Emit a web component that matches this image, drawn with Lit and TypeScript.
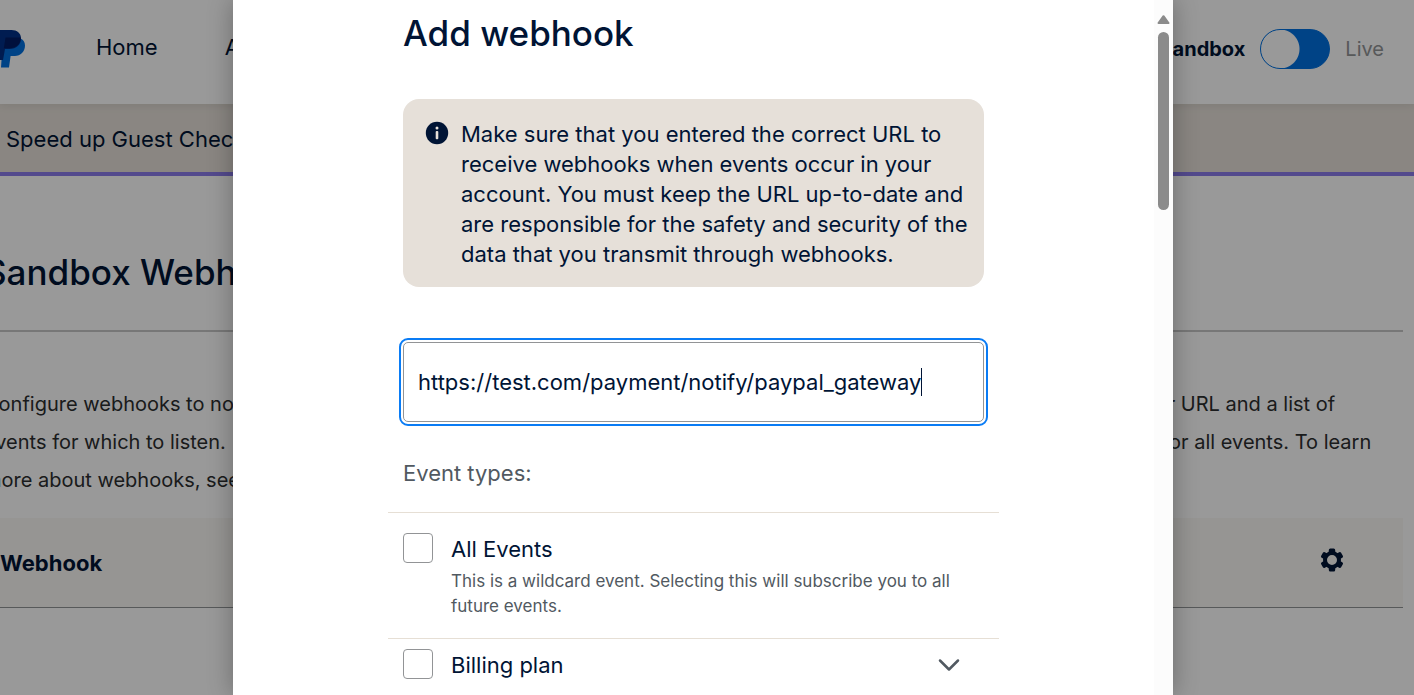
import { LitElement, html, css, svg } from "lit";
import { customElement, property, state } from "lit/decorators.js";

const gearTeeth = [0, 60, 120, 180, 240, 300];

@customElement("dashboard-page")
class DashboardPage extends LitElement {
  static styles = css`
    :host {
      display: block;
      height: 100%;
      overflow: hidden;
      color: #001435;
      font-size: 22px;
      line-height: 30px;
    }
    .header {
      display: flex;
      align-items: center;
      height: 104px;
      padding: 0 30px 6px 0;
      background: #fff;
      box-shadow: 0 2px 8px rgba(0, 0, 0, 0.08);
      position: relative;
      box-sizing: border-box;
    }
    .logo {
      display: block;
      width: 25px;
      height: 38px;
      margin-right: 71px;
    }
    .nav {
      display: flex;
      flex: 1;
      gap: 67px;
    }
    .nav a {
      color: inherit;
      text-decoration: none;
      padding-bottom: 4px;
    }
    .mode {
      display: flex;
      align-items: center;
      gap: 15px;
      font-size: 20px;
    }
    .mode-on {
      font-weight: 700;
    }
    .mode-off {
      color: #929496;
    }
    .switch {
      appearance: none;
      margin: 0;
      width: 70px;
      height: 40px;
      border: 1px solid #0070e0;
      border-radius: 20px;
      background: radial-gradient(circle at 19px 19px, #fff 19px, #0070e0 20px);
    }
    .banner {
      padding: 20px 6px 18px;
      background: #e6e0d9;
      border-bottom: 4px solid #8b7cec;
    }
    .body {
      margin: 0 11px 0 -16px;
    }
    .title {
      margin: 0;
      padding: 72px 0 34px;
      font-size: 35px;
      line-height: 48px;
      font-weight: 500;
      border-bottom: 2px solid #c6c6c6;
    }
    .intro {
      display: flex;
      justify-content: space-between;
      padding: 53px 0 19px;
      color: #2c2e2f;
      font-size: 20px;
      line-height: 38px;
      white-space: nowrap;
    }
    .intro p {
      margin: 0;
    }
    .intro-end {
      width: 334px;
    }
    .row {
      display: flex;
      align-items: center;
      justify-content: space-between;
      height: 89px;
      padding: 0 59px 0 16px;
      background: #faf8f5;
      border-bottom: 1px solid #929496;
      font-weight: 700;
    }
    .gear {
      border: 0;
      padding: 0 0 5px;
      background: none;
      color: inherit;
      display: flex;
    }
  `;

  render() {
    return html`
      <header class="header">
        <svg class="logo" viewBox="0 0 25 38" aria-hidden="true">
          <path fill="#0070e0" d="M1 37.500h8l1.600-11.500h4.200C20.500 26 25 21.500 25 15.500 25 12 23 9.500 20.500 8.500H3z" />
          <path fill="#003087" d="M-14 30H3l2-11h4.500C16.500 19 21 14.500 21 8.500 21 3 17 0 11.500 0H-10z" />
          <path fill="#001c64" d="M5.500 7.500h15.400C20.800 14 16 18.300 9.500 18.300H3.800z" />
        </svg>
        <nav class="nav">
          <a href="#home">Home</a>
          <a href="#apps">Apps</a>
        </nav>
        <div class="mode">
          <label class="mode-on" for="mode">Sandbox</label>
          <input class="switch" id="mode" type="checkbox" role="switch" />
          <span class="mode-off">Live</span>
        </div>
      </header>
      <div class="banner">Speed up Guest Checkout</div>
      <main class="body">
        <h1 class="title">Sandbox Webhooks</h1>
        <div class="intro">
          <p>Configure webhooks to notify<br />events for which to listen.<br />more about webhooks, see</p>
          <p class="intro-end">our listener URL and a list of<br />for events or all events. To learn</p>
        </div>
        <div class="row">
          <span>Webhook</span>
          <button class="gear" aria-label="Settings">
            <svg width="24" height="24" viewBox="-12 -12 24 24" fill="currentColor">
              ${gearTeeth.map(
                (a) => svg`<rect x="-3.200" y="-11.500" width="6.400" height="6" rx="1.500" transform="rotate(${a})" />`
              )}
              <circle r="7" fill="none" stroke="currentColor" stroke-width="4" />
            </svg>
          </button>
        </div>
      </main>
    `;
  }
}

@customElement("event-option")
class EventOption extends LitElement {
  @property() label = "";
  @property() note = "";
  @property({ type: Boolean }) expandable = false;

  static styles = css`
    :host {
      display: block;
      border-top: 1px solid #e6dfd5;
    }
    .option {
      display: grid;
      grid-template-columns: 30px 1fr auto;
      column-gap: 18px;
      padding: 10px 36px 10px 15px;
    }
    .roomy {
      padding: 20px 36px 19px 15px;
    }
    .box {
      appearance: none;
      margin: 0;
      width: 30px;
      height: 30px;
      border: 1px solid #929496;
      border-radius: 4px;
      background: #fff;
    }
    .name {
      padding-top: 1px;
      line-height: 30px;
    }
    .note {
      grid-column: 2 / -1;
      margin: 5px 0 0;
      color: #515961;
      font-size: 17px;
      line-height: 25px;
    }
    .toggle {
      display: flex;
      align-items: center;
      padding: 0;
      border: 0;
      background: none;
      color: #515961;
    }
  `;

  render() {
    return html`
      <div class="option ${this.note ? "roomy" : ""}">
        <input class="box" id="box" type="checkbox" />
        <label class="name" for="box">${this.label}</label>
        ${this.expandable
          ? html`<button class="toggle" aria-label="Expand ${this.label}">
              <svg width="28" height="28" viewBox="0 0 28 28" fill="none" stroke="currentColor" stroke-width="2.500" stroke-linecap="round" stroke-linejoin="round">
                <path d="M5 9.500l9 9 9-9" />
              </svg>
            </button>`
          : ""}
        ${this.note ? html`<p class="note">${this.note}</p>` : ""}
      </div>
    `;
  }
}

@customElement("webhook-dialog")
class WebhookDialog extends LitElement {
  @state() private url = "https://test.com/payment/notify/paypal_gateway";

  static styles = css`
    :host {
      display: flex;
      overflow: hidden;
      background: #fff;
      color: #001435;
      font-size: 22px;
      line-height: 30px;
      box-shadow: 0 0 24px rgba(0, 0, 0, 0.3);
    }
    .content {
      flex: 1;
      display: flex;
      flex-direction: column;
      align-items: center;
    }
    .form {
      width: 611px;
      max-width: 100%;
    }
    .head {
      padding: 9px 15px 0;
    }
    .title {
      margin: 0 0 42px;
      font-size: 35px;
      line-height: 48px;
      font-weight: 500;
    }
    .alert {
      display: flex;
      gap: 12px;
      padding: 20px 20px 18px 22px;
      border-radius: 16px;
      background: #e6e0d9;
    }
    .alert svg {
      flex: none;
      margin-top: 2px;
    }
    .alert p {
      margin: 0;
      white-space: nowrap;
    }
    .field {
      display: flex;
      align-items: center;
      height: 80px;
      box-sizing: border-box;
      margin: 55px 0 36px;
      padding: 0 14px;
      border: 1px solid #929496;
      border-radius: 5px;
      outline: 2px solid #0a7cf5;
      outline-offset: 2px;
      cursor: text;
    }
    .url {
      field-sizing: content;
      min-width: 0;
      padding: 0;
      border: 0;
      outline: 0;
      background: none;
      font: inherit;
      color: inherit;
    }
    .caret {
      width: 1px;
      height: 28px;
      background: #001435;
    }
    .types {
      margin: 0 0 24px;
      color: #515961;
    }
    .scrollbar {
      display: flex;
      flex-direction: column;
      align-items: center;
      gap: 8px;
      width: 19px;
      padding-top: 15px;
      background: #fcfcfc;
    }
    .thumb {
      width: 11px;
      height: 178px;
      border-radius: 6px;
      background: #8b8b8b;
    }
  `;

  render() {
    return html`
      <div class="content">
        <div class="form">
          <div class="head">
            <h2 class="title">Add webhook</h2>
            <div class="alert">
              <svg width="24" height="24" viewBox="0 0 24 24" aria-hidden="true">
                <circle cx="12" cy="12" r="11.200" fill="#001435" />
                <circle cx="12" cy="7" r="1.500" fill="#e6e0d9" />
                <rect x="10.700" y="10" width="2.600" height="8.300" rx="1" fill="#e6e0d9" />
              </svg>
              <p>
                Make sure that you entered the correct URL to<br />receive webhooks when events occur in your<br />account.
                You must keep the URL up-to-date and<br />are responsible for the safety and security of the<br />data that
                you transmit through webhooks.
              </p>
            </div>
            <label class="field">
              <input
                class="url"
                type="text"
                aria-label="Webhook URL"
                .value=${this.url}
                @input=${(e: Event) => (this.url = (e.target as HTMLInputElement).value)}
              />
              <span class="caret"></span>
            </label>
            <p class="types">Event types:</p>
          </div>
          <event-option
            label="All Events"
            note="This is a wildcard event. Selecting this will subscribe you to all future events."
          ></event-option>
          <event-option label="Billing plan" expandable></event-option>
        </div>
      </div>
      <div class="scrollbar" aria-hidden="true">
        <svg width="13" height="9" viewBox="0 0 13 9"><path d="M6.500 1.200 11.500 8h-10z" fill="#8b8b8b" stroke="#8b8b8b" stroke-width="2" stroke-linejoin="round" /></svg>
        <div class="thumb"></div>
      </div>
    `;
  }
}

@customElement("app-root")
class AppRoot extends LitElement {
  static styles = css`
    :host {
      display: block;
      position: relative;
      height: 100vh;
      overflow: hidden;
      background: #fff;
      font-family: Inter, "Liberation Sans", sans-serif;
    }
    .overlay {
      position: absolute;
      inset: 0;
      display: flex;
      justify-content: center;
      padding-right: 8px;
      background: rgba(0, 0, 0, 0.4);
    }
    .dialog {
      width: 940px;
      max-width: 100%;
    }
  `;

  render() {
    return html`
      <dashboard-page></dashboard-page>
      <div class="overlay">
        <webhook-dialog class="dialog" role="dialog" aria-label="Add webhook"></webhook-dialog>
      </div>
    `;
  }
}
